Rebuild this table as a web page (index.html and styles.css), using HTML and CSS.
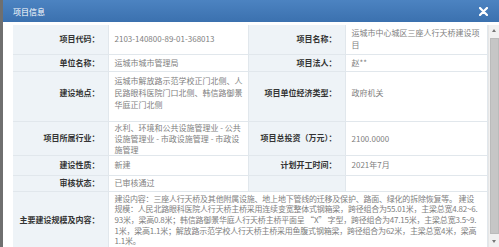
FILE: index.html
```html
<!DOCTYPE html>
<html lang="zh">
<head>
<meta charset="utf-8">
<title>项目信息</title>
<link rel="stylesheet" href="styles.css">
</head>
<body>
<div class="page">
  <div class="modal">
    <div class="header">
      <span class="title">项目信息</span>
      <svg class="close" width="9" height="9" viewBox="0 0 9 9"><path d="M1 1 L8 8 M8 1 L1 8" stroke="#fff" stroke-width="2.2" stroke-linecap="round"/></svg>
    </div>
    <div class="body">
      <div class="content">
        <table class="info">
          <colgroup><col class="c1"><col class="c2"><col class="c3"><col class="c4"></colgroup>
          <tr class="r1">
            <th>项目代码：</th><td>2103-140800-89-01-368013</td>
            <th>项目名称：</th><td>运城市中心城区三座人行天桥建设项<br>目</td>
          </tr>
          <tr class="r2">
            <th>单位名称：</th><td>运城市城市管理局</td>
            <th>项目法人：</th><td>赵**</td>
          </tr>
          <tr class="r3">
            <th>建设地点：</th><td>运城市解放路示范学校正门北侧、人<br>民路眼科医院门口北侧、韩信路御景<br>华庭正门北侧</td>
            <th>项目单位经济类型：</th><td>政府机关</td>
          </tr>
          <tr class="r4">
            <th>项目所属行业：</th><td>水利、环境和公共设施管理业 - 公共<br>设施管理业 - 市政设施管理 - 市政设<br>施管理</td>
            <th>项目总投资（万元）：</th><td>2100.0000</td>
          </tr>
          <tr class="r5">
            <th>建设性质：</th><td>新建</td>
            <th>计划开工时间：</th><td>2021年7月</td>
          </tr>
          <tr class="r6">
            <th>审核状态：</th><td>已审核通过</td>
            <th></th><td></td>
          </tr>
          <tr class="r7">
            <th>主要建设规模及内容：</th>
            <td colspan="3">建设内容：三座人行天桥及其他附属设施、地上地下管线的迁移及保护、路面、绿化的拆除恢复等。 建设<br>规模：人民北路眼科医院人行天桥主桥采用连续变宽整体式钢箱梁，跨径组合为55.01米，主梁总宽4.82~6.<br>93米，梁高0.8米；韩信路御景华庭人行天桥主桥平面呈 “X” 字型，跨径组合为47.15米，主梁总宽3.5~9.<br>1米，梁高1.1米；解放路示范学校人行天桥主桥采用鱼腹式钢箱梁，跨径组合为62米，主梁总宽4米，梁高<br>1.1米。</td>
          </tr>
        </table>
      </div>
      <div class="scrollbar">
        <div class="arrow up"></div>
        <div class="thumb"></div>
        <div class="arrow down"></div>
      </div>
    </div>
  </div>
</div>
</body>
</html>
```

FILE: styles.css
```css
html, body {
  margin: 0;
  padding: 0;
  width: 499px;
  height: 247px;
  overflow: hidden;
  background: #6f6f6f;
  font-family: "Noto Sans CJK SC", "Noto Sans", sans-serif;
}
.page {
  display: flex;
  height: 247px;
  padding-left: 3px;
}
.modal {
  flex: 1;
  display: flex;
  flex-direction: column;
  background: #fff;
  height: 247px;
}
.header {
  height: 22px;
  flex: none;
  display: flex;
  align-items: center;
  justify-content: space-between;
  padding: 0 12px 0 10px;
  background: linear-gradient(#4c83c1, #3b71af);
  color: #fff;
}
.title {
  font-size: 8px;
  line-height: 10px;
  margin-top: 2px;
}
.close {
  display: block;
}
.body {
  flex: 1;
  display: flex;
  padding-top: 3px;
  min-height: 0;
}
.content {
  flex: 1;
  padding-left: 10px;
  overflow: hidden;
}
.info {
  width: 474px;
  border-collapse: collapse;
  table-layout: fixed;
  font-size: 8px;
}
.c1 { width: 95px; }
.c2 { width: 140px; }
.c3 { width: 97px; }
.c4 { width: 142px; }
.info th, .info td {
  border: 1px solid #e1e7ec;
  padding: 0 0 0 6px;
  vertical-align: middle;
  white-space: nowrap;
  overflow: hidden;
}
.info th {
  background: #eef3f7;
  color: #333;
  font-weight: bold;
  text-align: right;
  padding: 0 8px 0 0;
  line-height: 12px;
}
.info td {
  color: #808080;
  text-align: left;
  line-height: 12px;
}
.info tr:first-child th, .info tr:first-child td { border-top: none; }
.info th:first-child { border-left: none; }
.r1 { height: 29px; }
.r2 { height: 17px; }
.r3 { height: 50px; }
.r3 th, .r3 td { padding-bottom: 7px; }
.r4 { height: 31px; }
.r4 td { line-height: 11px; }
.r5 { height: 20px; }
.r6 { height: 16px; }
.r7 td {
  line-height: 10.7px;
  vertical-align: top;
  padding-top: 2px;
  letter-spacing: -0.22px;
}
.r7 { height: 58px; }
.scrollbar {
  width: 12px;
  flex: none;
  display: flex;
  flex-direction: column;
  background: #f1f1f1;
  border-left: 1px solid #e6e6e6;
  box-sizing: border-box;
}
.arrow {
  height: 11px;
  flex: none;
  position: relative;
}
.arrow::after {
  content: "";
  position: absolute;
  left: 3px;
  border-left: 2.5px solid transparent;
  border-right: 2.5px solid transparent;
}
.arrow.up::after {
  top: 4px;
  border-bottom: 3px solid #777;
}
.arrow.down::after {
  top: 4px;
  border-top: 3px solid #777;
}
.thumb {
  flex: 1;
  margin: 2px 1px;
  background: #c6c6c6;
  border: 1px solid #bbb;
}
```
